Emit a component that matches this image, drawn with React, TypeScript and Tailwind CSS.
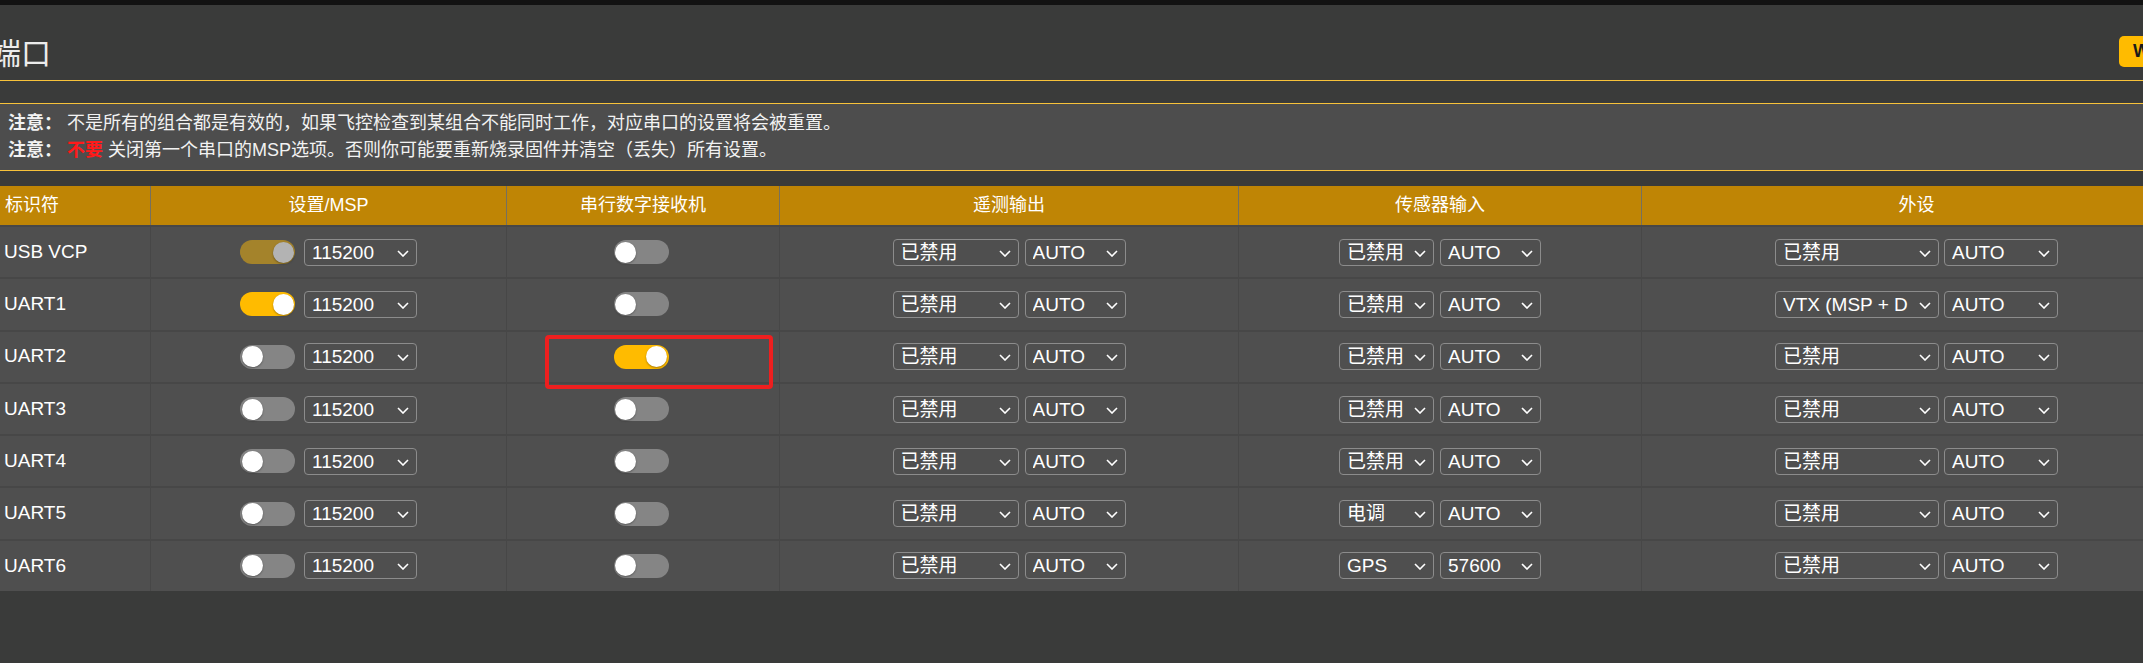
import React from 'react'

const FONT = { fontFamily: '"Liberation Sans", "Noto Sans CJK SC", sans-serif' }

type Toggle = 'off' | 'on' | 'locked'

interface PortRow {
  id: string
  msp: Toggle
  rx: Toggle
  telemetry: [string, string]
  sensor: [string, string]
  peripheral: [string, string]
  highlight?: boolean
}

const rows: PortRow[] = [
  { id: 'USB VCP', msp: 'locked', rx: 'off', telemetry: ['已禁用', 'AUTO'], sensor: ['已禁用', 'AUTO'], peripheral: ['已禁用', 'AUTO'] },
  { id: 'UART1', msp: 'on', rx: 'off', telemetry: ['已禁用', 'AUTO'], sensor: ['已禁用', 'AUTO'], peripheral: ['VTX (MSP + DisplayPort)', 'AUTO'] },
  { id: 'UART2', msp: 'off', rx: 'on', telemetry: ['已禁用', 'AUTO'], sensor: ['已禁用', 'AUTO'], peripheral: ['已禁用', 'AUTO'], highlight: true },
  { id: 'UART3', msp: 'off', rx: 'off', telemetry: ['已禁用', 'AUTO'], sensor: ['已禁用', 'AUTO'], peripheral: ['已禁用', 'AUTO'] },
  { id: 'UART4', msp: 'off', rx: 'off', telemetry: ['已禁用', 'AUTO'], sensor: ['已禁用', 'AUTO'], peripheral: ['已禁用', 'AUTO'] },
  { id: 'UART5', msp: 'off', rx: 'off', telemetry: ['已禁用', 'AUTO'], sensor: ['电调', 'AUTO'], peripheral: ['已禁用', 'AUTO'] },
  { id: 'UART6', msp: 'off', rx: 'off', telemetry: ['已禁用', 'AUTO'], sensor: ['GPS', '57600'], peripheral: ['已禁用', 'AUTO'] },
]

function Switch({ state }: { state: Toggle }) {
  const track =
    state === 'on' ? 'bg-[#ffbb00]' : state === 'locked' ? 'bg-[#a4832b]' : 'bg-[#858585]'
  const knob = state === 'locked' ? 'bg-[#b3b3b3]' : 'bg-white'
  return (
    <div className={`relative w-[55px] h-[24px] rounded-full shrink-0 ${track}`}>
      <div
        className={`absolute top-[1.5px] w-[21px] h-[21px] rounded-full shadow-[0_1px_2px_rgba(0,0,0,0.35)] ${knob} ${
          state === 'off' ? 'left-[1.5px]' : 'right-[1.5px]'
        }`}
      />
    </div>
  )
}

function Select({ value, className }: { value: string; className: string }) {
  return (
    <div
      className={`relative h-[27px] shrink-0 rounded-[4px] border border-[#8c8c8c] text-white text-[19px] leading-[25px] ${className}`}
    >
      <div className="absolute left-[7px] top-0 bottom-0 right-[30px] overflow-hidden whitespace-nowrap">{value}</div>
      <svg
        className="absolute right-[7px] top-[10px]"
        width="12"
        height="7"
        viewBox="0 0 12 7"
        fill="none"
        stroke="white"
        strokeWidth="1.6"
      >
        <polyline points="1,1 6,6 11,1" />
      </svg>
    </div>
  )
}

export default function App() {
  return (
    <div className="w-[2143px] h-[663px] overflow-hidden bg-[#3a3b3a]" style={FONT}>
      <div className="w-[2191px]">
        <div className="h-[5px] bg-[#121212]" />

        {/* Title */}
        <div className="h-[76px] pt-[18px] flex items-center border-b border-[#f7c23a]">
          <h1
            className="-ml-[9px] text-[30px] font-normal text-[#ececec]"
            style={{ fontFamily: '"Noto Sans CJK SC", sans-serif' }}
          >
            端口
          </h1>
          <button className="ml-auto w-[72px] h-[31px] rounded-[5px] bg-[#ffbb00] text-[#1a1a1a] font-bold text-[18px] text-left pl-[14px]">
            WIKI
          </button>
        </div>

        {/* Notes */}
        <div className="mt-[22px] border-y border-[#f7c23a] bg-[#4d4d4d] py-[6px] pl-[8px] text-[18px] leading-[27px] text-[#f2f2f2]">
          <p>
            <strong>注意：</strong> 不是所有的组合都是有效的，如果飞控检查到某组合不能同时工作，对应串口的设置将会被重置。
          </p>
          <p>
            <strong>注意：</strong> <strong className="text-[#ff1a1a]">不要</strong> 关闭第一个串口的MSP选项。否则你可能要重新烧录固件并清空（丢失）所有设置。
          </p>
        </div>

        {/* Table */}
        <div className="mt-[15px]">
          <div className="grid grid-cols-[150px_356px_273px_459px_403px_550px] h-[39px] bg-[#bf8505] text-white text-[18px]">
            <div className="flex items-center pl-[5px]">标识符</div>
            <div className="flex items-center justify-center border-l border-[#75705f]">设置/MSP</div>
            <div className="flex items-center justify-center border-l border-[#75705f]">串行数字接收机</div>
            <div className="flex items-center justify-center border-l border-[#75705f]">遥测输出</div>
            <div className="flex items-center justify-center border-l border-[#75705f]">传感器输入</div>
            <div className="flex items-center justify-center border-l border-[#75705f]">外设</div>
          </div>

          {rows.map((r) => (
            <div
              key={r.id}
              className="grid grid-cols-[150px_356px_273px_459px_403px_550px] h-[52.3px] bg-[#4f4f4f] border-t-2 border-[#474747] first:border-t-0 text-white"
            >
              <div className="flex items-center pl-[4px] text-[19px]">{r.id}</div>
              <div className="flex items-center justify-center gap-[9px] border-l border-[#474747]">
                <Switch state={r.msp} />
                <Select value="115200" className="w-[113px]" />
              </div>
              <div className="relative flex items-center justify-center pr-[4px] border-l border-[#474747]">
                <Switch state={r.rx} />
                {r.highlight && (
                  <div className="absolute top-[3px] left-[38px] right-[6px] h-[54px] rounded-[4px] border-[4px] border-[#ee1f1f] z-10" />
                )}
              </div>
              <div className="flex items-center justify-center gap-[6px] border-l border-[#474747]">
                <Select value={r.telemetry[0]} className="w-[126px]" />
                <Select value={r.telemetry[1]} className="w-[101px]" />
              </div>
              <div className="flex items-center justify-center gap-[6px] border-l border-[#474747]">
                <Select value={r.sensor[0]} className="w-[95px]" />
                <Select value={r.sensor[1]} className="w-[101px]" />
              </div>
              <div className="flex items-center justify-center gap-[5px] border-l border-[#474747]">
                <Select value={r.peripheral[0]} className="w-[164px]" />
                <Select value={r.peripheral[1]} className="w-[114px]" />
              </div>
            </div>
          ))}
        </div>
      </div>
    </div>
  )
}
